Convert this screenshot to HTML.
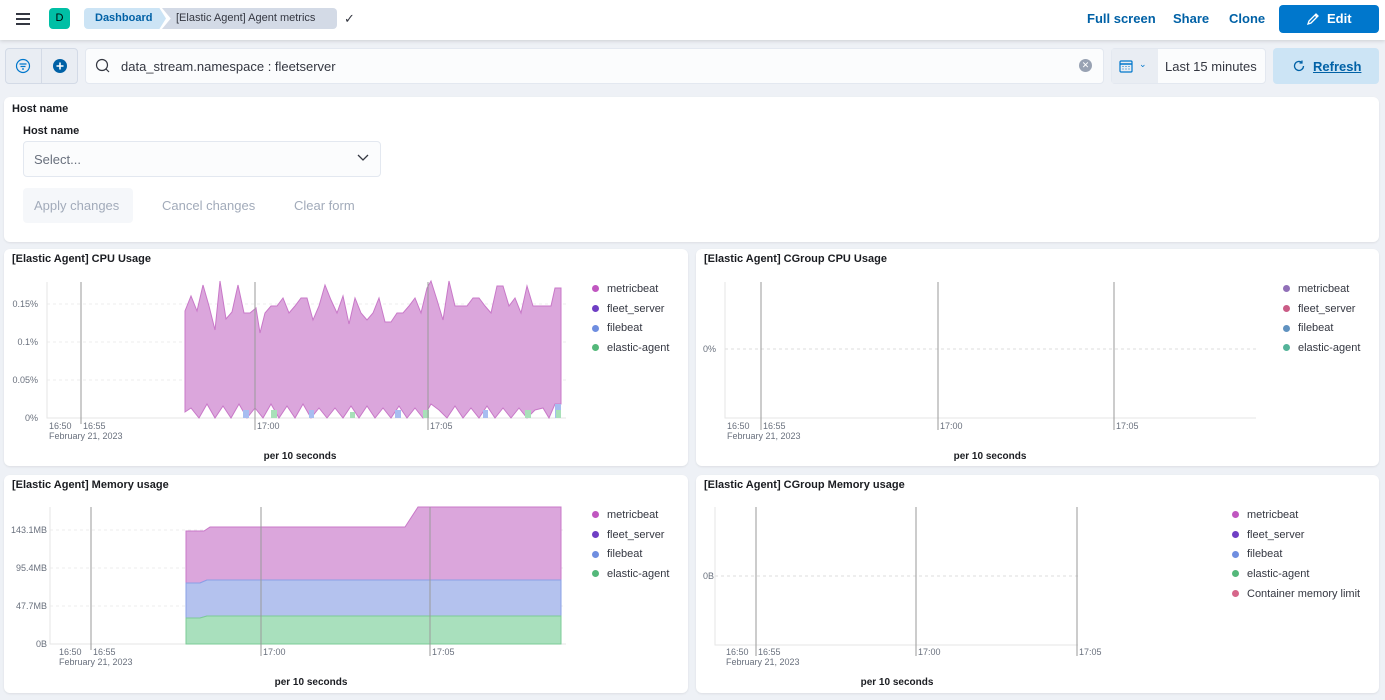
<!DOCTYPE html>
<html><head><meta charset="utf-8"><style>
*{box-sizing:border-box;margin:0;padding:0}
body{width:1385px;height:700px;overflow:hidden;background:#eef1f6;font-family:"Liberation Sans",sans-serif;position:relative;color:#343741}
.a{position:absolute}
.hdr{left:0;top:0;width:1385px;height:40px;background:#fff;box-shadow:0 1px 4px rgba(0,0,0,.15)}
.panel{background:#fff;border-radius:6px;box-shadow:0 1px 2px rgba(0,0,0,.08)}
.t{font-size:11px;font-weight:bold;color:#1a1c21}
.lg{font-size:11px;color:#343741}
.lg div{height:19.7px;display:flex;align-items:center}
.lg i{display:inline-block;width:7px;height:7px;border-radius:50%;margin-right:8px}
.btn{color:#0061a6;font-weight:bold;font-size:13px}
</style></head><body>
<div class="a hdr"></div>
<div class="a" style="left:16px;top:13px;width:14px;height:2px;background:#343741;box-shadow:0 5px 0 #343741,0 10px 0 #343741"></div>
<div class="a" style="left:49px;top:8px;width:21px;height:21px;border-radius:4px;background:#00bfa5;font-size:11px;text-align:center;line-height:21px;color:#000">D</div>
<div class="a" style="left:84px;top:8px;width:82px;height:21px;background:#cce4f5;border-radius:4px 0 0 4px;clip-path:polygon(0 0,92% 0,100% 50%,92% 100%,0 100%);color:#0061a6;font-weight:bold;font-size:11px;line-height:21px;padding-left:11px">Dashboard</div>
<div class="a" style="left:162px;top:8px;width:175px;height:21px;background:#d3dae6;border-radius:0 4px 4px 0;clip-path:polygon(0 0,100% 0,100% 100%,0 100%,5% 50%);font-size:11px;line-height:21px;padding-left:14px;color:#343741">[Elastic Agent] Agent metrics</div>
<div class="a" style="left:344px;top:11px;font-size:13px;color:#343741">✓</div>
<div class="a btn" style="left:1087px;top:11px">Full screen</div>
<div class="a btn" style="left:1173px;top:11px">Share</div>
<div class="a btn" style="left:1229px;top:11px">Clone</div>
<div class="a" style="left:1279px;top:5px;width:100px;height:28px;background:#0077cc;border-radius:4px;color:#fff;font-weight:bold;font-size:13px;line-height:28px;padding-left:48px">Edit</div>
<svg class="a" style="left:1306px;top:12px" width="14" height="14" viewBox="0 0 14 14"><path d="M2 12 L3 9 L10 2 L12 4 L5 11 Z M9 3 L11 5" fill="none" stroke="#fff" stroke-width="1.3"/></svg>

<!-- query bar -->
<div class="a" style="left:5px;top:48px;width:73px;height:36px;background:#e9edf3;border:1px solid #d3dae6;border-radius:4px"></div>
<div class="a" style="left:41px;top:48px;width:1px;height:36px;background:#d3dae6"></div>
<svg class="a" style="left:15px;top:58px" width="16" height="16"><circle cx="8" cy="8" r="6.5" fill="none" stroke="#0077cc" stroke-width="1.2"/><path d="M4.5 6h7M5.5 8.5h5M7 11h2" stroke="#0077cc" stroke-width="1.2"/></svg>
<svg class="a" style="left:52px;top:58px" width="16" height="16"><circle cx="8" cy="8" r="7" fill="#0061a6"/><path d="M4.5 8h7M8 4.5v7" stroke="#fff" stroke-width="1.6"/></svg>
<div class="a" style="left:85px;top:48px;width:1019px;height:36px;background:#fbfcfd;border:1px solid #e3e8f0;border-radius:4px"></div>
<svg class="a" style="left:95px;top:58px" width="16" height="16"><circle cx="7" cy="7" r="5.5" fill="none" stroke="#343741" stroke-width="1.2"/><path d="M11 11l3 3" stroke="#343741" stroke-width="1.2"/></svg>
<div class="a" style="left:121px;top:59px;font-size:13px;color:#343741">data_stream.namespace : fleetserver</div>
<div class="a" style="left:1079px;top:59px;width:13px;height:13px;border-radius:50%;background:#98a2b3;color:#fff;font-size:9px;text-align:center;line-height:13px">✕</div>
<div class="a" style="left:1111px;top:48px;width:155px;height:36px;background:#fbfcfd;border:1px solid #e3e8f0;border-radius:4px"></div>
<div class="a" style="left:1112px;top:49px;width:46px;height:34px;background:#e9edf3"></div>
<svg class="a" style="left:1119px;top:59px" width="14" height="14"><rect x="1" y="2" width="12" height="11" rx="1" fill="none" stroke="#0077cc" stroke-width="1.2"/><path d="M1 5h12" stroke="#0077cc" stroke-width="1.5"/><path d="M3.5 7.5h1M6.5 7.5h1M9.5 7.5h1M3.5 10h1M6.5 10h1M9.5 10h1" stroke="#0077cc"/></svg>
<div class="a" style="left:1139px;top:59px;font-size:9px;color:#0077cc">⌄</div>
<div class="a" style="left:1165px;top:59px;font-size:13px;color:#343741">Last 15 minutes</div>
<div class="a" style="left:1273px;top:48px;width:106px;height:36px;background:#cce4f5;border-radius:4px"></div>
<svg class="a" style="left:1292px;top:59px" width="14" height="14"><path d="M11.5 7a4.5 4.5 0 1 1-1.5-3.4" fill="none" stroke="#0061a6" stroke-width="1.3"/><path d="M10 1.5v2.5h-2.5" fill="none" stroke="#0061a6" stroke-width="1.2"/></svg>
<div class="a" style="left:1313px;top:59px;font-size:13px;font-weight:bold;color:#0061a6;text-decoration:underline">Refresh</div>

<!-- host name panel -->
<div class="a panel" style="left:4px;top:97px;width:1375px;height:145px"></div>
<div class="a t" style="left:12px;top:103px">Host name</div>
<div class="a t" style="left:23px;top:125px">Host name</div>
<div class="a" style="left:23px;top:141px;width:358px;height:36px;background:#fbfcfd;border:1px solid #e3e8f0;border-radius:4px;font-size:13px;color:#69707d;padding:10px 0 0 10px">Select...</div>
<svg class="a" style="left:357px;top:153px" width="12" height="10"><path d="M1 2l5 5 5-5" fill="none" stroke="#343741" stroke-width="1.3"/></svg>
<div class="a" style="left:23px;top:188px;width:110px;height:35px;background:#f5f7fa;border-radius:4px;font-size:13px;color:#a2abba;padding:10px 0 0 11px">Apply changes</div>
<div class="a" style="left:162px;top:198px;font-size:13px;color:#a2abba">Cancel changes</div>
<div class="a" style="left:294px;top:198px;font-size:13px;color:#a2abba">Clear form</div>

<!-- chart panels -->
<div class="a panel" style="left:4px;top:249px;width:684px;height:217px"></div>
<div class="a panel" style="left:696px;top:249px;width:683px;height:217px"></div>
<div class="a panel" style="left:4px;top:475px;width:684px;height:218px"></div>
<div class="a panel" style="left:696px;top:475px;width:683px;height:218px"></div>
<div class="a t" style="left:12px;top:253px">[Elastic Agent] CPU Usage</div>
<div class="a t" style="left:704px;top:253px">[Elastic Agent] CGroup CPU Usage</div>
<div class="a t" style="left:12px;top:479px">[Elastic Agent] Memory usage</div>
<div class="a t" style="left:704px;top:479px">[Elastic Agent] CGroup Memory usage</div>

<div class="a lg" style="left:592px;top:279px"><div><i style="background:#c057c0"></i>metricbeat</div><div><i style="background:#6f3fc4"></i>fleet_server</div><div><i style="background:#6f8ee0"></i>filebeat</div><div><i style="background:#54b87a"></i>elastic-agent</div></div>
<div class="a lg" style="left:1283px;top:279px"><div><i style="background:#9170b8"></i>metricbeat</div><div><i style="background:#e7664c;background:#ca5c86"></i>fleet_server</div><div><i style="background:#6092c0"></i>filebeat</div><div><i style="background:#54b399"></i>elastic-agent</div></div>
<div class="a lg" style="left:592px;top:505px"><div><i style="background:#c057c0"></i>metricbeat</div><div><i style="background:#6f3fc4"></i>fleet_server</div><div><i style="background:#6f8ee0"></i>filebeat</div><div><i style="background:#54b87a"></i>elastic-agent</div></div>
<div class="a lg" style="left:1232px;top:505px"><div><i style="background:#c057c0"></i>metricbeat</div><div><i style="background:#6f3fc4"></i>fleet_server</div><div><i style="background:#6f8ee0"></i>filebeat</div><div><i style="background:#54b87a"></i>elastic-agent</div><div><i style="background:#d6668a"></i>Container memory limit</div></div>

<svg class="a" style="left:0;top:0" width="1385" height="700" font-family="Liberation Sans, sans-serif" font-size="9" fill="#69707d">
<!-- CPU -->
<g stroke="#eee" stroke-dasharray="3 3"><path d="M47 304H566M47 342H566M47 380H566"/></g>
<path d="M47 282V418H566" fill="none" stroke="#e6e6e6"/>
<path d="M185 412 L185 311 L191 296 L197 311 L203 285 L209 306 L215 330 L220 281 L226 319 L232 312 L238 285 L244 313 L250 313 L256 308 L260 333 L265 313 L271 306 L277 306 L283 298 L289 313 L295 306 L301 298 L307 298 L313 320 L319 306 L325 285 L331 300 L337 313 L343 296 L349 324 L355 298 L361 313 L367 320 L373 313 L379 298 L385 322 L391 322 L397 313 L403 313 L409 306 L415 298 L421 313 L427 288 L431 281 L437 300 L443 320 L449 281 L455 306 L461 306 L467 306 L473 298 L479 298 L485 306 L491 313 L497 286 L503 286 L509 306 L515 298 L521 313 L527 286 L533 306 L539 306 L545 306 L551 306 L555 288 L561 288 L561 404 L555 404 L549 418 L543 408 L535 410 L527 418 L519 408 L511 418 L503 408 L495 418 L487 406 L479 418 L471 408 L463 418 L455 406 L447 418 L439 410 L431 404 L423 418 L415 408 L407 418 L399 406 L391 418 L383 408 L375 418 L367 406 L359 418 L351 406 L343 418 L335 408 L327 418 L319 408 L311 418 L303 404 L295 418 L287 406 L279 418 L271 404 L263 418 L255 408 L247 418 L239 404 L231 418 L223 406 L215 418 L207 404 L199 418 L191 408 Z" fill="#dba6dc" stroke="#c878c8" stroke-width="1"/>
<g fill="#a7bdf0"><rect x="243" y="410" width="6" height="8"/><rect x="309" y="410" width="5" height="8"/><rect x="395" y="410" width="6" height="8"/><rect x="555" y="404" width="6" height="14"/><rect x="483" y="410" width="5" height="8"/></g>
<g fill="#a8e0b9"><rect x="271" y="410" width="6" height="8"/><rect x="423" y="410" width="6" height="8"/><rect x="525" y="410" width="6" height="8"/><rect x="556" y="410" width="5" height="8"/><rect x="350" y="412" width="5" height="6"/></g>
<g stroke="#9a9a9a"><path d="M81 282V424M255 282V430M428 282V430"/></g>
<text x="38" y="307" text-anchor="end">0.15%</text><text x="38" y="345" text-anchor="end">0.1%</text><text x="38" y="383" text-anchor="end">0.05%</text><text x="38" y="421" text-anchor="end">0%</text>
<text x="49" y="429">16:50</text><text x="83" y="429">16:55</text><text x="49" y="439">February 21, 2023</text><text x="257" y="429">17:00</text><text x="430" y="429">17:05</text>
<text x="300" y="459" text-anchor="middle" font-size="10" font-weight="bold" fill="#1a1c21">per 10 seconds</text>
<!-- CGroup CPU -->
<path d="M725 282V418H1256" fill="none" stroke="#e6e6e6"/>
<path d="M725 349H1256" stroke="#ddd" stroke-dasharray="3 3"/>
<g stroke="#9a9a9a"><path d="M761 282V430M938 282V430M1114 282V430"/></g>
<text x="716" y="352" text-anchor="end">0%</text>
<text x="727" y="429">16:50</text><text x="763" y="429">16:55</text><text x="727" y="439">February 21, 2023</text><text x="940" y="429">17:00</text><text x="1116" y="429">17:05</text>
<text x="990" y="459" text-anchor="middle" font-size="10" font-weight="bold" fill="#1a1c21">per 10 seconds</text>
<!-- Memory -->
<g stroke="#eee" stroke-dasharray="3 3"><path d="M50 530H566M50 568H566M50 606H566"/></g>
<path d="M50 507V644H566" fill="none" stroke="#e6e6e6"/>
<path d="M186 531 L204 531 L210 527 L405 527 L418 507 L561 507 L561 580 L207 580 L200 583 L186 583 Z" fill="#dba6dc" stroke="#c878c8"/>
<path d="M186 583 L200 583 L207 580 L561 580 L561 616 L207 616 L200 618 L186 618 Z" fill="#b4c2ee" stroke="#8aa0e6"/>
<path d="M186 618 L200 618 L207 616 L561 616 L561 644 L186 644 Z" fill="#a9e0bd" stroke="#7ccb97"/>
<g stroke="#9a9a9a"><path d="M91 507V650M261 507V656M430 507V656"/></g>
<text x="47" y="533" text-anchor="end">143.1MB</text><text x="47" y="571" text-anchor="end">95.4MB</text><text x="47" y="609" text-anchor="end">47.7MB</text><text x="47" y="647" text-anchor="end">0B</text>
<text x="59" y="655">16:50</text><text x="93" y="655">16:55</text><text x="59" y="665">February 21, 2023</text><text x="263" y="655">17:00</text><text x="432" y="655">17:05</text>
<text x="311" y="685" text-anchor="middle" font-size="10" font-weight="bold" fill="#1a1c21">per 10 seconds</text>
<!-- CGroup Memory -->
<path d="M715 507V645H1078" fill="none" stroke="#e6e6e6"/>
<path d="M715 576H1078" stroke="#ddd" stroke-dasharray="3 3"/>
<g stroke="#9a9a9a"><path d="M756 507V656M916 507V656M1077 507V656"/></g>
<text x="714" y="579" text-anchor="end">0B</text>
<text x="726" y="655">16:50</text><text x="758" y="655">16:55</text><text x="726" y="665">February 21, 2023</text><text x="918" y="655">17:00</text><text x="1079" y="655">17:05</text>
<text x="897" y="685" text-anchor="middle" font-size="10" font-weight="bold" fill="#1a1c21">per 10 seconds</text>
</svg>
</body></html>
